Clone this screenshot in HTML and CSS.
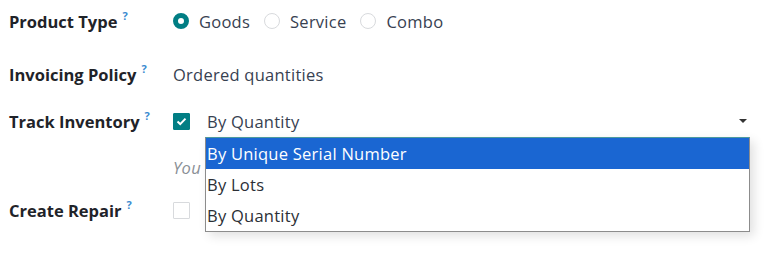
FILE: index.html
```html
<!DOCTYPE html>
<html>
<head>
<meta charset="utf-8">
<link rel="stylesheet" href="styles.css">
</head>
<body>
<div class="form">
  <div class="row row-type">
    <div class="label">Product Type<sup class="help">?</sup></div>
    <div class="value radios">
      <span class="radio checked"></span><span class="opt">Goods</span>
      <span class="radio"></span><span class="opt">Service</span>
      <span class="radio"></span><span class="opt">Combo</span>
    </div>
  </div>
  <div class="row row-policy">
    <div class="label">Invoicing Policy<sup class="help">?</sup></div>
    <div class="value">Ordered quantities</div>
  </div>
  <div class="row row-track">
    <div class="label">Track Inventory<sup class="help">?</sup></div>
    <div class="value track">
      <span class="check on"><svg width="11" height="9" viewBox="0 0 11 9"><path d="M1.5 4.6 L4.2 7.1 L9.5 1.6" fill="none" stroke="#fff" stroke-width="2"/></svg></span>
      <div class="select">
        <span>By Quantity</span>
        <span class="caret"></span>
      </div>
    </div>
  </div>
  <div class="row row-hint">
    <div class="label"></div>
    <div class="value hint">You</div>
  </div>
  <div class="row row-repair">
    <div class="label">Create Repair<sup class="help">?</sup></div>
    <div class="value"><span class="check"></span></div>
  </div>
  <ul class="dropdown">
    <li class="active">By Unique Serial Number</li>
    <li>By Lots</li>
    <li>By Quantity</li>
  </ul>
</div>
</body>
</html>
```
FILE: styles.css
```css
* { box-sizing: border-box; }
body {
  margin: 0;
  background: #fff;
  font-family: "Open Sans", "Noto Sans", sans-serif;
  font-size: 16.5px;
  letter-spacing: 0.25px;
  color: #374151;
}
.form {
  position: relative;
  padding-left: 9px;
  width: 768px;
  height: 261px;
}
.row {
  display: grid;
  grid-template-columns: 164px 1fr;
  align-items: center;
}
.row-type { height: 42px; }
.row-policy { height: 64px; }
.row-track { height: 30px; }
.row-hint { height: 62px; }
.row-repair { height: 30px; margin-top: -3px; }
.label {
  font-weight: 700;
  color: #1f2329;
  letter-spacing: 0;
  white-space: nowrap;
}
.help {
  color: #3a8bd0;
  font-size: 11px;
  font-weight: 700;
  margin-left: 5px;
  vertical-align: 8px;
  line-height: 0;
}
.value { display: flex; align-items: center; white-space: nowrap; }
.radios .radio {
  width: 16px;
  height: 16px;
  border-radius: 50%;
  border: 1px solid #d8dadd;
  display: inline-block;
  margin-right: 10px;
}
.radios .radio.checked {
  border: 5px solid #017e84;
  background: #fff;
}
.radios .opt { margin-right: 14px; }
.check {
  width: 17px;
  height: 17px;
  border: 1px solid #d8dadd;
  border-radius: 1px;
  display: inline-flex;
  align-items: center;
  justify-content: center;
}
.check.on { background: #017e84; border-color: #017e84; }
.track { gap: 17px; }
.select {
  flex: 1;
  display: flex;
  justify-content: space-between;
  align-items: center;
  margin-right: 20px;
}
.caret {
  width: 0; height: 0;
  border-left: 4px solid transparent;
  border-right: 4px solid transparent;
  border-top: 4px solid #333;
  margin-right: 1px;
}
.hint {
  font-style: italic;
  color: #8a8f96;
}
.dropdown {
  position: absolute;
  left: 205px;
  top: 137px;
  width: 545px;
  margin: 0;
  padding: 0;
  list-style: none;
  background: #fff;
  border: 1px solid #8c8c8c;
  border-top: 1px solid #4c9a9e;
  box-shadow: 4px 4px 10px rgba(0,0,0,0.12);
  color: #2b2f36;
}
.dropdown li {
  height: 31px;
  line-height: 31px;
  padding-left: 1px;
}
.dropdown li.active {
  background: #1a66d2;
  color: #fff;
}
```
